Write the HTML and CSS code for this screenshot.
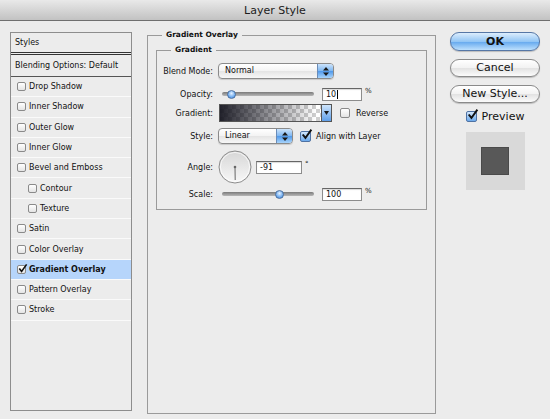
FILE: index.html
```html
<!DOCTYPE html>
<html lang="en">
<head>
    <meta charset="UTF-8">
    <meta name="viewport" content="width=device-width, initial-scale=1.0">
    <title>Layer Style</title>
    <link rel="stylesheet" href="styles.css">
</head>
<body>
    <div class="titlebar">Layer Style</div>

    <div class="dialog">
        <ul class="styles-list">
            <li class="head">Styles</li>
            <li class="blend">Blending Options: Default</li>
            <li><span class="check"></span>Drop Shadow</li>
            <li><span class="check"></span>Inner Shadow</li>
            <li><span class="check"></span>Outer Glow</li>
            <li><span class="check"></span>Inner Glow</li>
            <li><span class="check"></span>Bevel and Emboss</li>
            <li class="sub"><span class="check"></span>Contour</li>
            <li class="sub"><span class="check"></span>Texture</li>
            <li><span class="check"></span>Satin</li>
            <li><span class="check"></span>Color Overlay</li>
            <li class="selected"><span class="check"><svg class="tick" viewBox="0 0 12 12"><path d="M2.5 6 L5 9.2 L10.5 1.5"/></svg></span>Gradient Overlay</li>
            <li><span class="check"></span>Pattern Overlay</li>
            <li><span class="check"></span>Stroke</li>
        </ul>

        <fieldset class="overlay-panel">
            <legend>Gradient Overlay</legend>
            <fieldset class="gradient-section">
                <legend>Gradient</legend>
                <div class="form">
                    <label>Blend Mode:</label>
                    <div class="ctrl">
                        <div class="popup blend-mode">
                            <span class="popup-label">Normal</span>
                            <span class="stepper"><svg width="6" height="9" viewBox="0 0 6 9"><path d="M3 0 L6 3.5 H0 Z M3 9 L6 5.5 H0 Z"/></svg></span>
                        </div>
                    </div>

                    <label>Opacity:</label>
                    <div class="ctrl">
                        <div class="slider"><span class="knob" style="left: 10%"></span></div>
                        <div class="field">10<span class="caret"></span></div>
                        <span class="unit">%</span>
                    </div>

                    <label>Gradient:</label>
                    <div class="ctrl">
                        <div class="swatch">
                            <span class="ramp"></span>
                            <span class="drop"><svg width="5" height="4" viewBox="0 0 5 4"><path d="M0 0 H5 L2.5 4 Z"/></svg></span>
                        </div>
                        <span class="check reverse"></span>
                        <span class="opt">Reverse</span>
                    </div>

                    <label>Style:</label>
                    <div class="ctrl">
                        <div class="popup style-mode">
                            <span class="popup-label">Linear</span>
                            <span class="stepper"><svg width="6" height="9" viewBox="0 0 6 9"><path d="M3 0 L6 3.5 H0 Z M3 9 L6 5.5 H0 Z"/></svg></span>
                        </div>
                        <span class="check on align"><svg class="tick" viewBox="0 0 12 12"><path d="M2.5 6 L5 9.2 L10.5 1.5"/></svg></span>
                        <span class="opt">Align with Layer</span>
                    </div>

                    <label>Angle:</label>
                    <div class="ctrl">
                        <svg class="dial" width="34" height="34" viewBox="0 0 34 34">
                            <defs>
                                <linearGradient id="dialFill" x1="0" y1="0" x2="0" y2="1">
                                    <stop offset="0" stop-color="#d6d6d6"/>
                                    <stop offset="1" stop-color="#f8f8f8"/>
                                </linearGradient>
                            </defs>
                            <circle cx="17" cy="17" r="16" fill="url(#dialFill)" stroke="#8c8c8c"/>
                            <circle cx="17" cy="17" r="14.6" fill="none" stroke="#ffffff" stroke-opacity="0.7"/>
                            <line x1="17" y1="17" x2="17.2" y2="30" stroke="#666" stroke-width="1"/>
                            <circle cx="17" cy="17" r="1.3" fill="#666"/>
                        </svg>
                        <div class="field angle">-91</div>
                        <span class="unit">°</span>
                    </div>

                    <label>Scale:</label>
                    <div class="ctrl">
                        <div class="slider"><span class="knob" style="left: 62%"></span></div>
                        <div class="field">100</div>
                        <span class="unit">%</span>
                    </div>
                </div>
            </fieldset>
        </fieldset>

        <div class="actions">
            <button class="btn default">OK</button>
            <button class="btn">Cancel</button>
            <button class="btn">New Style...</button>
            <div class="preview">
                <span class="check on big"><svg class="tick" viewBox="0 0 12 12"><path d="M2.5 6 L5 9.2 L10.5 1.5"/></svg></span>
                Preview
            </div>
            <div class="thumb"><span></span></div>
        </div>
    </div>
</body>
</html>
```

FILE: styles.css
```css
body {
    margin: 0;
    width: 550px;
    height: 419px;
    overflow: hidden;
    background: #ececec;
    font-family: "DejaVu Sans", sans-serif;
    color: #111;
}
.titlebar {
    height: 20px;
    line-height: 22px;
    text-align: center;
    font-size: 11px;
    color: #1c1c1c;
    background: linear-gradient(#e9e9e9, #c2c2c2);
    border-bottom: 1px solid #6f6f6f;
}
.dialog {
    display: flex;
    align-items: flex-start;
    padding-left: 10px;
}

/* left list */
.styles-list {
    list-style: none;
    margin: 11px 0 0;
    padding: 0;
    width: 122px;
    height: 379px;
    box-sizing: border-box;
    border: 1px solid #8d8d8d;
    font-size: 8px;
    flex: none;
}
.styles-list li {
    display: flex;
    align-items: center;
    height: 19.3px;
    padding-left: 6px;
    border-bottom: 1px solid #fafafa;
}
.styles-list .head {
    height: 19px;
    padding-left: 4px;
    border-bottom: 3px double #333;
}
.styles-list .blend {
    height: 21px;
    padding-left: 4px;
    border-bottom: 1px solid #555;
}
.styles-list .sub {
    padding-left: 17px;
}
.styles-list .selected {
    background: #b6d5fb;
    font-weight: bold;
}

/* checkboxes */
.check {
    position: relative;
    width: 9px;
    height: 9px;
    box-sizing: border-box;
    border: 1px solid #8a8a8a;
    border-radius: 2px;
    background: linear-gradient(#fff, #e4e4e4);
    margin-right: 3px;
    flex: none;
}
.check.on {
    background: linear-gradient(#d2e7fc, #6ba9ec);
    border-color: #4f72a3;
}
.tick {
    position: absolute;
    left: -1px;
    top: -3px;
    width: 11px;
    height: 11px;
    fill: none;
    stroke: #111;
    stroke-width: 1.8;
}
.check.reverse {
    width: 10px;
    height: 10px;
    margin: 0 6px 0 8px;
}
.check.align {
    width: 11px;
    height: 11px;
    margin: 0 5px 0 7px;
}
.check.align .tick {
    width: 13px;
    height: 13px;
    top: -4px;
}

/* gradient overlay panel */
fieldset {
    margin: 0;
    border: 1px solid #9a9a9a;
    min-width: 0;
}
legend {
    font-size: 7.5px;
    font-weight: bold;
    line-height: 10px;
    padding: 0 4px;
}
.overlay-panel {
    margin: 9px 0 0 15px;
    padding: 0 8px;
    width: 289px;
    height: 384px;
    box-sizing: border-box;
    flex: none;
}
.overlay-panel > legend {
    margin-left: 6px;
}
.gradient-section {
    margin-top: 5px;
    padding: 3px 0 7px;
}
.gradient-section > legend {
    margin-left: 14px;
}
.form {
    display: grid;
    grid-template-columns: 56px auto;
    grid-template-rows: 26px 16px 18px 24px 34px 16px;
    column-gap: 5px;
    row-gap: 2px;
    align-items: center;
    font-size: 8px;
}
.form label {
    text-align: right;
}
.ctrl {
    display: flex;
    align-items: center;
}

.popup {
    display: flex;
    height: 16px;
    box-sizing: border-box;
    border: 1px solid #8a8a8a;
    border-radius: 4px;
    background: linear-gradient(#fff, #f3f3f3 50%, #e4e4e4 51%, #f7f7f7);
    box-shadow: 0 1px 1px rgba(0, 0, 0, 0.15);
    overflow: hidden;
}
.blend-mode {
    width: 116px;
}
.style-mode {
    width: 75px;
}
.popup-label {
    flex: 1;
    padding-left: 6px;
    line-height: 14px;
}
.stepper {
    width: 15px;
    display: flex;
    align-items: center;
    justify-content: center;
    border-left: 1px solid #6a8cb8;
    background: linear-gradient(#cde4fb, #7db6f1 50%, #4f98ea 51%, #a8d4fb);
}
.stepper path, .drop path {
    fill: #1a1a1a;
}

.slider {
    position: relative;
    width: 92px;
    height: 4px;
    margin-left: 4px;
    border-radius: 2px;
    background: linear-gradient(#7a7a7a, #b8b8b8);
}
.knob {
    position: absolute;
    top: 50%;
    width: 9px;
    height: 9px;
    margin: -4.5px 0 0 -4.5px;
    box-sizing: border-box;
    border-radius: 50%;
    border: 1px solid #4d71a0;
    background: radial-gradient(circle at 50% 35%, #e6f2ff, #72aef0 60%, #3d7dd2);
}
.field {
    display: flex;
    align-items: center;
    width: 40px;
    height: 13px;
    box-sizing: border-box;
    margin-left: 8px;
    padding-left: 3px;
    border: 1px solid #8c8c8c;
    border-top-color: #666;
    background: #fff;
    box-shadow: inset 0 1px 1px rgba(0, 0, 0, 0.15);
    font-size: 8px;
}
.field.angle {
    width: 46px;
    margin-left: 4px;
}
.caret {
    width: 1px;
    height: 9px;
    margin-left: 1px;
    background: #000;
}
.unit {
    margin: 0 0 6px 3px;
    font-size: 7px;
    line-height: 8px;
}

.swatch {
    display: flex;
    height: 18px;
    margin-left: 1px;
    box-sizing: border-box;
    border: 1px solid #555;
}
.ramp {
    width: 101px;
    background:
        linear-gradient(to right, rgba(22, 22, 32, 0.95), rgba(22, 22, 32, 0) 95%),
        repeating-conic-gradient(#cfcfcf 0 25%, #fff 0 50%) 0 0 / 8px 8px;
}
.drop {
    width: 9px;
    display: flex;
    align-items: center;
    justify-content: center;
    border-left: 1px solid #555;
    background: linear-gradient(#cfe5fb, #5f9fe9);
}
.dial {
    flex: none;
}

/* buttons column */
.actions {
    margin: 11px 0 0 14px;
    width: 90px;
    display: flex;
    flex-direction: column;
    align-items: center;
    gap: 8px;
    flex: none;
}
.btn {
    width: 90px;
    height: 18px;
    box-sizing: border-box;
    padding: 0;
    border: 1px solid #8a8a8a;
    border-radius: 9px;
    background: linear-gradient(#fff, #f2f2f2 50%, #e2e2e2 51%, #fbfbfb);
    box-shadow: 0 1px 1px rgba(0, 0, 0, 0.2);
    font-family: "DejaVu Sans", sans-serif;
    font-size: 11px;
    line-height: 16px;
    color: #111;
}
.btn.default {
    height: 19px;
    border-color: #5677a6;
    font-weight: bold;
    background: linear-gradient(#dcedfd, #93c6f5 50%, #62a7ee 51%, #bde0fd);
}
.preview {
    display: flex;
    align-items: center;
    height: 15px;
    margin-top: -2px;
    font-size: 11px;
}
.check.big {
    width: 11px;
    height: 11px;
    margin-right: 5px;
}
.check.big .tick {
    width: 13px;
    height: 13px;
    top: -4px;
}
.thumb {
    display: flex;
    align-items: center;
    justify-content: center;
    width: 59px;
    height: 58px;
    background: #d9d9d9;
}
.thumb span {
    width: 28px;
    height: 28px;
    box-sizing: border-box;
    border: 1px solid #4a4a4a;
    background: #585858;
}
```
